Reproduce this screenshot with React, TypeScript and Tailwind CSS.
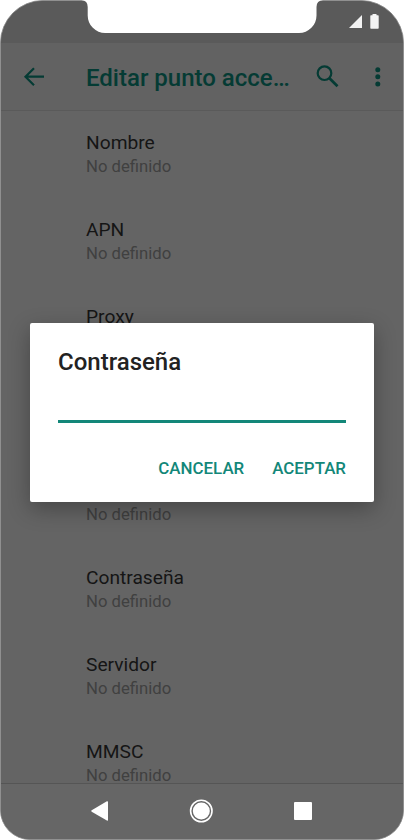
const settings = ['Nombre', 'APN', 'Proxy', 'Puerto', 'Nombre de usuario', 'Contraseña', 'Servidor', 'MMSC'];

function Notch() {
  return (
    <svg className="absolute left-[80px] top-0" width="245" height="34" viewBox="0 0 245 34" fill="#fff">
      <path d="M0 0H1.500Q7.700 .5 7.700 7V15.500A17.500 17.500 0 0 0 25.200 33H219A17.500 17.500 0 0 0 236.500 15.500V7Q236.500 .5 243 0Z" />
    </svg>
  );
}

function StatusBar() {
  return (
    <header className="flex h-[43px] shrink-0 justify-end bg-[#5a5a5a] pr-[24px] pt-[14px]">
      <div className="flex items-start gap-2">
        <svg width="13" height="14" viewBox="0 0 13 14" fill="#f3f3f3">
          <path d="M0 14L13 1V14Z" />
        </svg>
        <svg width="9" height="15" viewBox="0 0 9 15" fill="#f3f3f3">
          <path d="M2.500 0H6.500V1.200H8Q8.700 1.200 8.700 2V14Q8.700 14.800 8 14.800H1Q.3 14.800 .3 14V2Q.3 1.200 1 1.200H2.500Z" />
        </svg>
      </div>
    </header>
  );
}

function AppBar() {
  return (
    <div className="flex h-[68px] shrink-0 items-center border-b border-[#5a5a5a] bg-[#626262] text-[#053b34]">
      <svg className="ml-[22px]" width="22" height="20" viewBox="0 0 22 20" fill="none" stroke="currentColor" strokeWidth="2.200">
        <path d="M21 9.700H2.500M11 1.200L2.500 9.700L11 18.200" />
      </svg>
      <h1 className="ml-[41px] mt-[2px] w-[206px] whitespace-nowrap text-[24px] font-medium leading-7">Editar punto acce…</h1>
      <svg className="ml-[24px]" width="24" height="24" viewBox="0 0 24 24" fill="none" stroke="currentColor" strokeWidth="2.200">
        <circle cx="8.500" cy="8.200" r="6.800" />
        <path d="M13.200 13L21.500 21.200" strokeWidth="2.700" />
      </svg>
      <svg className="ml-[35px]" width="6" height="20" viewBox="0 0 6 20" fill="currentColor">
        <circle cx="2.800" cy="2.700" r="2.500" />
        <circle cx="2.800" cy="9.800" r="2.500" />
        <circle cx="2.800" cy="16.900" r="2.500" />
      </svg>
    </div>
  );
}

function NavigationBar() {
  return (
    <nav className="flex h-[56px] shrink-0 items-center border-t border-[#555] bg-[#666] pb-px">
      <svg className="ml-[90px]" width="18" height="20" viewBox="0 0 18 20" fill="#fff">
        <path d="M.7 9.300L15.900.3Q17 0 17 1V19Q17 20 15.900 19.500L.7 10.700Q-.2 10 .7 9.300Z" />
      </svg>
      <svg className="ml-[80px]" width="24" height="24" viewBox="0 0 24 24">
        <circle cx="12.300" cy="12" r="10.700" fill="none" stroke="#fff" strokeWidth="1.600" />
        <circle cx="12.300" cy="12" r="8.500" fill="#fff" />
      </svg>
      <span className="ml-[81px] size-[18px] rounded-[1px] bg-white" />
    </nav>
  );
}

function PasswordDialog() {
  return (
    <section role="dialog" className="absolute left-[30px] top-[323px] flex h-[179px] w-[344px] flex-col rounded-[2px] bg-white px-[28px] pt-[24px] shadow-[0_7px_22px_rgba(0,0,0,0.3)]">
      <h2 className="text-[24px] font-medium leading-[30px] text-[#222]">Contraseña</h2>
      <div className="mt-[43px] h-[3px] w-[288px] bg-[#138779]" />
      <div className="mt-[33px] flex justify-end gap-[28px] text-[16.900px] font-medium leading-6 text-[#138779]">
        <button>CANCELAR</button>
        <button>ACEPTAR</button>
      </div>
    </section>
  );
}

export default function App() {
  return (
    <main className="relative h-[840px] w-[404px] bg-white font-[Roboto,sans-serif]">
      <div className="flex h-[840px] w-[404px] flex-col overflow-hidden rounded-b-[30px] rounded-t-[43px] border border-[#909090] bg-[#646464]">
        <div className="-mt-px flex min-h-0 flex-1 flex-col">
          <StatusBar />
          <AppBar />
          <ul className="min-h-0 flex-1 overflow-hidden pl-[85px]">
            {settings.map((name) => (
              <li key={name} className="flex h-[87px] flex-col justify-center">
                <span className="text-[19.200px] leading-6 text-[#151515]">{name}</span>
                <span className="text-[16.700px] leading-6 text-[#404040]">No definido</span>
              </li>
            ))}
          </ul>
          <NavigationBar />
        </div>
      </div>
      <Notch />
      <PasswordDialog />
    </main>
  );
}
